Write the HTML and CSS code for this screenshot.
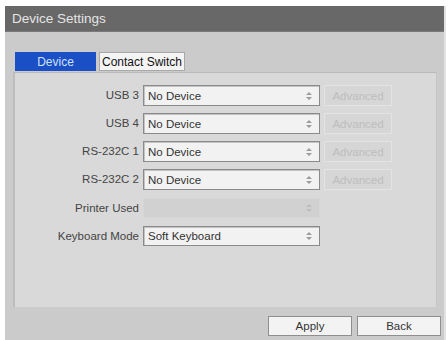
FILE: index.html
```html
<!DOCTYPE html>
<html lang="en">
<head>
    <meta charset="UTF-8">
    <meta name="viewport" content="width=device-width, initial-scale=1.0">
    <title>Device Settings</title>
    <link rel="stylesheet" href="styles.css">
</head>
<body>
    <div class="window">
        <div class="titlebar">Device Settings</div>

        <div class="window-body">
            <div class="tabs">
                <div class="tab active">Device</div>
                <div class="tab">Contact Switch</div>
            </div>

            <div class="panel">
                <div class="form-grid">
                    <label class="field-label">USB 3</label>
                    <div class="select">
                        <span>No Device</span>
                        <svg class="arrow" width="6" height="8" viewBox="0 0 6 8"><path d="M3 0 L6 3 L0 3 Z M0 5 L6 5 L3 8 Z"/></svg>
                    </div>
                    <button class="adv-btn" disabled>Advanced</button>

                    <label class="field-label">USB 4</label>
                    <div class="select">
                        <span>No Device</span>
                        <svg class="arrow" width="6" height="8" viewBox="0 0 6 8"><path d="M3 0 L6 3 L0 3 Z M0 5 L6 5 L3 8 Z"/></svg>
                    </div>
                    <button class="adv-btn" disabled>Advanced</button>

                    <label class="field-label">RS-232C 1</label>
                    <div class="select">
                        <span>No Device</span>
                        <svg class="arrow" width="6" height="8" viewBox="0 0 6 8"><path d="M3 0 L6 3 L0 3 Z M0 5 L6 5 L3 8 Z"/></svg>
                    </div>
                    <button class="adv-btn" disabled>Advanced</button>

                    <label class="field-label">RS-232C 2</label>
                    <div class="select">
                        <span>No Device</span>
                        <svg class="arrow" width="6" height="8" viewBox="0 0 6 8"><path d="M3 0 L6 3 L0 3 Z M0 5 L6 5 L3 8 Z"/></svg>
                    </div>
                    <button class="adv-btn" disabled>Advanced</button>

                    <label class="field-label">Printer Used</label>
                    <div class="select disabled">
                        <span></span>
                        <svg class="arrow" width="6" height="8" viewBox="0 0 6 8"><path d="M3 0 L6 3 L0 3 Z M0 5 L6 5 L3 8 Z"/></svg>
                    </div>
                    <div></div>

                    <label class="field-label">Keyboard Mode</label>
                    <div class="select">
                        <span>Soft Keyboard</span>
                        <svg class="arrow" width="6" height="8" viewBox="0 0 6 8"><path d="M3 0 L6 3 L0 3 Z M0 5 L6 5 L3 8 Z"/></svg>
                    </div>
                    <div></div>
                </div>
            </div>

            <div class="actions">
                <button class="action-btn">Apply</button>
                <button class="action-btn">Back</button>
            </div>
        </div>
    </div>
</body>
</html>
```

FILE: styles.css
```css
body {
    margin: 0;
    background-color: #fff;
    font-family: "Liberation Sans", Arial, sans-serif;
    color: #333;
}
.window {
    width: 439px;
    height: 334px;
    margin: 6px 0 0 5px;
    display: flex;
    flex-direction: column;
    border-right: 2px solid #e2e2e2;
}
.titlebar {
    height: 26px;
    line-height: 26px;
    padding-left: 7px;
    background-color: #686868;
    color: #e4e4e4;
    font-size: 13.5px;
    border-bottom: 1px solid #7a7a7a;
    box-sizing: border-box;
}
.window-body {
    flex: 1;
    background-color: #cbcbcb;
    padding: 20px 1px 0 8px;
}
.tabs {
    display: flex;
    gap: 3px;
    margin-left: 2px;
    height: 19px;
}
.tab {
    font-size: 12px;
    line-height: 19px;
    padding: 0 2px;
    background-color: #f4f4f4;
    color: #111;
    border: 1px solid #a8a8a8;
    box-sizing: border-box;
}
.tab.active {
    width: 81px;
    text-align: center;
    background-color: #1a4fc6;
    color: #cfe0f8;
    border-color: #1a4fc6;
}
.panel {
    margin-top: 1px;
    margin-right: 6px;
    height: 235px;
    box-sizing: border-box;
    background-color: #d9d9d9;
    border-top: 1px solid #bababa;
    border-left: 2px solid #bdbdbd;
    border-right: 1px solid #c6c6c6;
    padding-top: 12px;
}
.form-grid {
    display: grid;
    grid-template-columns: 124px 177px 68px;
    grid-auto-rows: 21px;
    column-gap: 4px;
    row-gap: 7px;
}
.form-grid > :nth-child(n+13) {
    margin-top: 1px;
}
.field-label {
    text-align: right;
    font-size: 11.5px;
    line-height: 21px;
    color: #444;
}
.select {
    display: flex;
    align-items: center;
    justify-content: space-between;
    padding: 0 7px 0 4px;
    background-color: #f2f2f2;
    border: 1px solid #8a8a8a;
    box-shadow: inset 1px 1px 0 #c4c4c4;
    font-size: 11.5px;
    color: #333;
    box-sizing: border-box;
}
.select .arrow {
    fill: #9c9c9c;
}
.select.disabled {
    background-color: #d1d1d1;
    border-color: #d6d6d6;
    box-shadow: none;
}
.select.disabled .arrow {
    fill: #bdbdbd;
}
.adv-btn {
    font-family: inherit;
    font-size: 11.5px;
    background-color: #d6d6d6;
    border: 1px solid #e3e3e3;
    color: #bdbdbd;
    padding: 0;
}
.actions {
    display: flex;
    justify-content: flex-end;
    gap: 5px;
    margin-top: 9px;
    padding-right: 2px;
}
.action-btn {
    width: 84px;
    height: 20px;
    font-family: inherit;
    font-size: 11.5px;
    color: #333;
    background-color: #f3f3f3;
    border: 1px solid #8f8f8f;
    padding: 0;
}
```
